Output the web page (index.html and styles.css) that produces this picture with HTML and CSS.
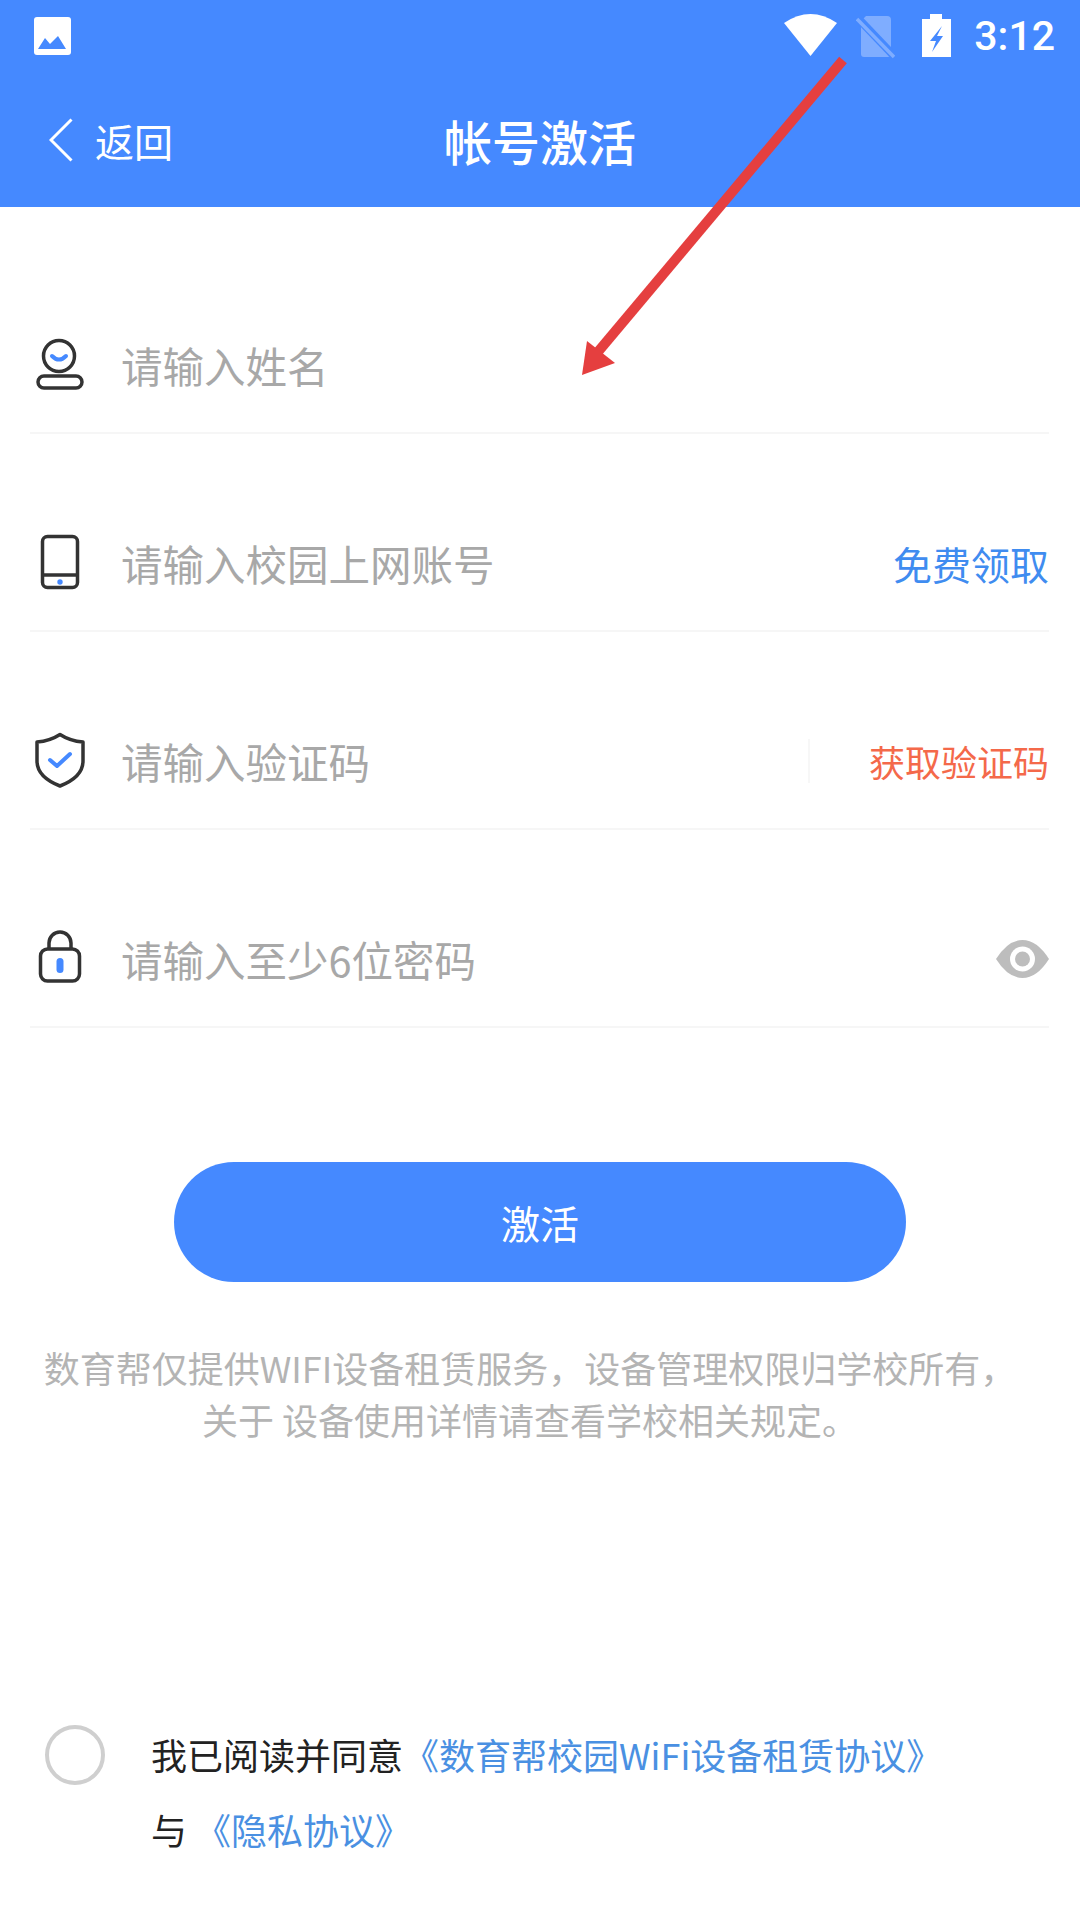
FILE: index.html
```html
<!DOCTYPE html>
<html lang="zh-CN">
<head>
<meta charset="utf-8">
<title>帐号激活</title>
<link rel="stylesheet" href="styles.css">
</head>
<body>
<div class="page">
  <header class="header">
    <div class="status">
      <svg class="st-image" width="37" height="60" viewBox="0 0 37 60"><rect x="0" y="11" width="37" height="38" rx="3" fill="#fff"/><path d="M4 43 L11 32 L16 38 L24 30 L32 43 Z" fill="#4589ff"/></svg>
      <div class="status-right">
        <svg class="st-wifi" width="53" height="60" viewBox="0 0 53 60"><path d="M0 17 Q26.5 -1 53 17 L26.5 50 Z" fill="#fff"/></svg>
        <svg class="st-sim" width="39" height="60" viewBox="0 0 39 60"><path d="M10 10 H31 Q35 10 35 14 V48 Q35 51 32 51 H8 Q5 51 5 48 V15 Z" fill="#7fadff"/><path d="M-2 8 L38 50" stroke="#4589ff" stroke-width="8" fill="none"/><path d="M1 13 L38 51" stroke="#7fadff" stroke-width="3.5" fill="none"/></svg>
        <svg class="st-batt" width="29" height="60" viewBox="0 0 29 60"><path d="M8 8 H20 V13 H29 V51 H0 V13 H8 Z" fill="#fff"/><path d="M20 20 L8 35 H14 L10 46 L21 30 H15 Z" fill="#4589ff"/></svg>
        <span class="time">3:12</span>
      </div>
    </div>
    <nav class="nav">
      <div class="back">
        <svg width="24" height="44" viewBox="0 0 24 44"><path d="M22.5 1.5 L2 22 L22.5 42.5" fill="none" stroke="#fff" stroke-width="3"/></svg>
        <span>返回</span>
      </div>
      <h1 class="title">帐号激活</h1>
      <div></div>
    </nav>
  </header>

  <main class="form">
    <div class="row">
      <svg class="icon" width="60" height="60" viewBox="0 0 60 60"><circle cx="29" cy="21" r="15.5" fill="none" stroke="#333" stroke-width="3.5"/><path d="M22 21 Q29 28 36 21" fill="none" stroke="#4589ff" stroke-width="4" stroke-linecap="round"/><rect x="8" y="41" width="44" height="12" rx="6" fill="none" stroke="#333" stroke-width="3.5"/></svg>
      <span class="placeholder">请输入姓名</span>
    </div>
    <div class="row">
      <svg class="icon" width="60" height="60" viewBox="0 0 60 60"><rect x="12.5" y="3.5" width="35" height="51" rx="5" fill="none" stroke="#333" stroke-width="3.5"/><path d="M12.5 42 H47.5" stroke="#333" stroke-width="3.5"/><circle cx="30" cy="49" r="2.7" fill="#4589ff"/></svg>
      <span class="placeholder">请输入校园上网账号</span>
      <span class="free">免费领取</span>
    </div>
    <div class="row">
      <svg class="icon" width="60" height="60" viewBox="0 0 60 60"><path d="M30 3.5 Q20 10 7 11 V30 Q7 46 30 55 Q53 46 53 30 V11 Q40 10 30 3.5 Z" fill="none" stroke="#333" stroke-width="3.5" stroke-linejoin="round"/><path d="M20 29 L27 35 L40 23" fill="none" stroke="#4589ff" stroke-width="4" stroke-linecap="round" stroke-linejoin="round"/></svg>
      <span class="placeholder">请输入验证码</span>
      <span class="code">获取验证码</span>
    </div>
    <div class="row">
      <svg class="icon" width="60" height="60" viewBox="0 0 60 60"><rect x="10.500" y="20" width="39" height="32" rx="7" fill="none" stroke="#333" stroke-width="3.5"/><path d="M19 20 V14 A11 11 0 0 1 41 14 V20" fill="none" stroke="#333" stroke-width="3.500"/><rect x="26.500" y="29" width="7" height="15" rx="3.500" fill="#4589ff"/></svg>
      <span class="placeholder">请输入至少6位密码</span>
      <svg class="eye" width="53" height="38" viewBox="0 0 53 38"><path d="M0 19 Q12 0 26.500 0 Q41 0 53 19 Q41 38 26.500 38 Q12 38 0 19 Z" fill="#bdbdbd"/><circle cx="26.500" cy="19" r="12.500" fill="#fff"/><circle cx="26.500" cy="19" r="7.500" fill="#bdbdbd"/></svg>
    </div>

    <button class="submit" type="button">激活</button>

    <p class="note">数育帮仅提供WIFI设备租赁服务，设备管理权限归学校所有，<br>关于 设备使用详情请查看学校相关规定。</p>

    <div class="agree">
      <span class="radio"></span>
      <div class="agree-text">
        <div>我已阅读并同意<a class="link">《数育帮校园WiFi设备租赁协议》</a></div>
        <div>与 <a class="link">《隐私协议》</a></div>
      </div>
    </div>
  </main>

  <svg class="arrow" width="1080" height="1920" viewBox="0 0 1080 1920"><path d="M843 60 L597 353" stroke="#e53f3f" stroke-width="10" fill="none"/><path d="M582 375 L587 341 L615 363 Z" fill="#e53f3f"/></svg>
</div>
</body>
</html>
```

FILE: styles.css
```css
* {
  box-sizing: border-box;
}

html,
body {
  margin: 0;
  padding: 0;
  background: #fff;
}

body {
  font-family: "Noto Sans CJK SC", "Noto Sans", sans-serif;
}

.page {
  position: relative;
  width: 1080px;
  height: 1920px;
  overflow: hidden;
}

.header {
  height: 207px;
  background: #4589ff;
  color: #fff;
}

.status {
  height: 72px;
  display: flex;
  align-items: center;
  justify-content: space-between;
  padding: 0 25px 0 34px;
}

.status-right {
  display: flex;
  align-items: center;
}

.st-wifi {
  margin-right: 19px;
}

.st-sim {
  margin-right: 27px;
}

.st-batt {
  margin-right: 23px;
}

.time {
  font-family: Roboto, sans-serif;
  font-size: 41px;
  font-weight: 500;
  line-height: 60px;
}

.nav {
  height: 135px;
  display: grid;
  grid-template-columns: 1fr auto 1fr;
  align-items: center;
}

.back {
  display: flex;
  align-items: center;
  gap: 22px;
  padding-left: 49px;
  font-size: 39px;
  line-height: 50px;
}

.title {
  margin: 0;
  font-size: 48px;
  font-weight: 500;
  line-height: 60px;
}

.form {
  padding-top: 29px;
}

.row {
  display: flex;
  align-items: center;
  height: 198px;
  margin: 0 31px 0 30px;
  padding-top: 62px;
  border-bottom: 2px solid #f6f6f6;
  font-size: 41.5px;
  line-height: 60px;
}

.icon {
  flex: none;
  margin-right: 31px;
}

.placeholder {
  flex: 1;
  color: #a8a8a8;
}

.free {
  font-size: 39px;
  color: #3f8cf0;
}

.code {
  width: 241px;
  height: 44px;
  border-left: 2px solid #f7f7f7;
  text-align: right;
  font-size: 36px;
  line-height: 44px;
  color: #f4694a;
}

.eye {
  flex: none;
}

.submit {
  display: block;
  width: 732px;
  height: 120px;
  margin: 134px auto 0;
  padding: 0;
  border: 0;
  border-radius: 60px;
  background: #4589ff;
  color: #fff;
  font-family: inherit;
  font-size: 39px;
}

.note {
  margin: 59px 0 0;
  padding-right: 20px;
  text-align: center;
  font-size: 36px;
  line-height: 52px;
  color: #b4b4b4;
}

.agree {
  display: flex;
  align-items: flex-start;
  gap: 46px;
  margin-top: 272px;
  padding-left: 45px;
}

.radio {
  flex: none;
  width: 60px;
  height: 60px;
  margin-top: 8px;
  border: 4px solid #cfcfcf;
  border-radius: 50%;
}

.agree-text {
  font-size: 36px;
  line-height: 75px;
  color: #222;
}

.link {
  color: #4a90e2;
}

.arrow {
  position: absolute;
  top: 0;
  left: 0;
  pointer-events: none;
}
```
